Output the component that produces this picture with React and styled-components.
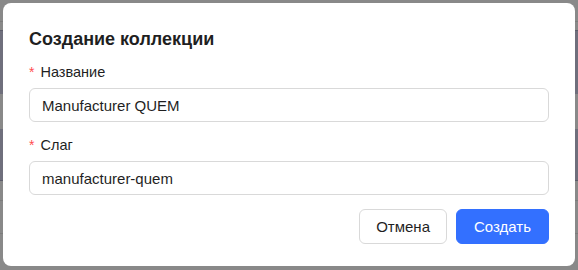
import React from "react";
import styled, { createGlobalStyle } from "styled-components";

const Global = createGlobalStyle`
  html, body { margin: 0; padding: 0; }
  body { font-family: "Liberation Sans", Arial, sans-serif; }
  * { box-sizing: border-box; }
`;

const Screen = styled.div`
  position: relative;
  width: 578px;
  height: 270px;
  overflow: hidden;
  background: #898989;
`;

const Backdrop = styled.div`
  display: flex;
  flex-direction: column;
  height: 100%;
`;

const Band = styled.div`
  flex: 0 0 ${(p) => p.$h}px;
  background: ${(p) => (p.$dark ? "#6f6f7c" : "#898989")};
  border-bottom: ${(p) => (p.$line ? `1px solid ${p.$line}` : "none")};
`;

const Modal = styled.div`
  position: absolute;
  left: 3px;
  top: 3px;
  width: 572px;
  height: 263px;
  background: #ffffff;
  border-radius: 8px;
  padding: 24px 26px 22px;
  display: flex;
  flex-direction: column;
`;

const Title = styled.h2`
  margin: 0 0 10px;
  font-size: 18px;
  line-height: 24px;
  font-weight: 700;
  color: #1f1f1f;
`;

const Field = styled.div`
  display: flex;
  flex-direction: column;
  margin-bottom: ${(p) => p.$mb}px;
`;

const Label = styled.label`
  display: flex;
  align-items: center;
  height: 22px;
  margin-bottom: 5px;
  font-size: 14.5px;
  color: #1f1f1f;
`;

const Star = styled.span`
  color: #ff4d4f;
  font-size: 14px;
  margin-right: 6px;
  font-family: SimSun, "Liberation Sans", sans-serif;
`;

const Input = styled.input`
  height: 34px;
  width: 100%;
  border: 1px solid #d9d9d9;
  border-radius: 6px;
  padding: 0 12px;
  font-family: "Liberation Sans", Arial, sans-serif;
  font-size: 15px;
  color: #1f1f1f;
  background: #fff;
  outline: none;
`;

const Footer = styled.div`
  display: flex;
  justify-content: flex-end;
  gap: 9px;
  margin-top: auto;
`;

const Button = styled.button`
  height: 35px;
  padding: 0 ${(p) => (p.$primary ? 17 : 16)}px;
  border-radius: 6px;
  font-family: "Liberation Sans", Arial, sans-serif;
  font-size: 15px;
  cursor: pointer;
  border: 1px solid ${(p) => (p.$primary ? "#3370ff" : "#d9d9d9")};
  background: ${(p) => (p.$primary ? "#3370ff" : "#ffffff")};
  color: ${(p) => (p.$primary ? "#ffffff" : "#1f1f1f")};
`;

export default function App() {
  return (
    <>
      <Global />
      <Screen>
        <Backdrop>
          <Band $h={22} $line="#7c7c7c" />
          <Band $h={9} $line="#5c5c6a" />
          <Band $h={63} $dark />
          <Band $h={35} />
          <Band $h={52} $dark $line="#5c5c6a" />
          <Band $h={20} $line="#7c7c7c" />
          <Band $h={33} $line="#7c7c7c" />
          <Band $h={33} />
        </Backdrop>
        <Modal>
          <Title>Создание коллекции</Title>
          <Field $mb={12}>
            <Label>
              <Star>*</Star>Название
            </Label>
            <Input defaultValue="Manufacturer QUEM" />
          </Field>
          <Field $mb={0}>
            <Label>
              <Star>*</Star>Слаг
            </Label>
            <Input defaultValue="manufacturer-quem" />
          </Field>
          <Footer>
            <Button>Отмена</Button>
            <Button $primary>Создать</Button>
          </Footer>
        </Modal>
      </Screen>
    </>
  );
}
